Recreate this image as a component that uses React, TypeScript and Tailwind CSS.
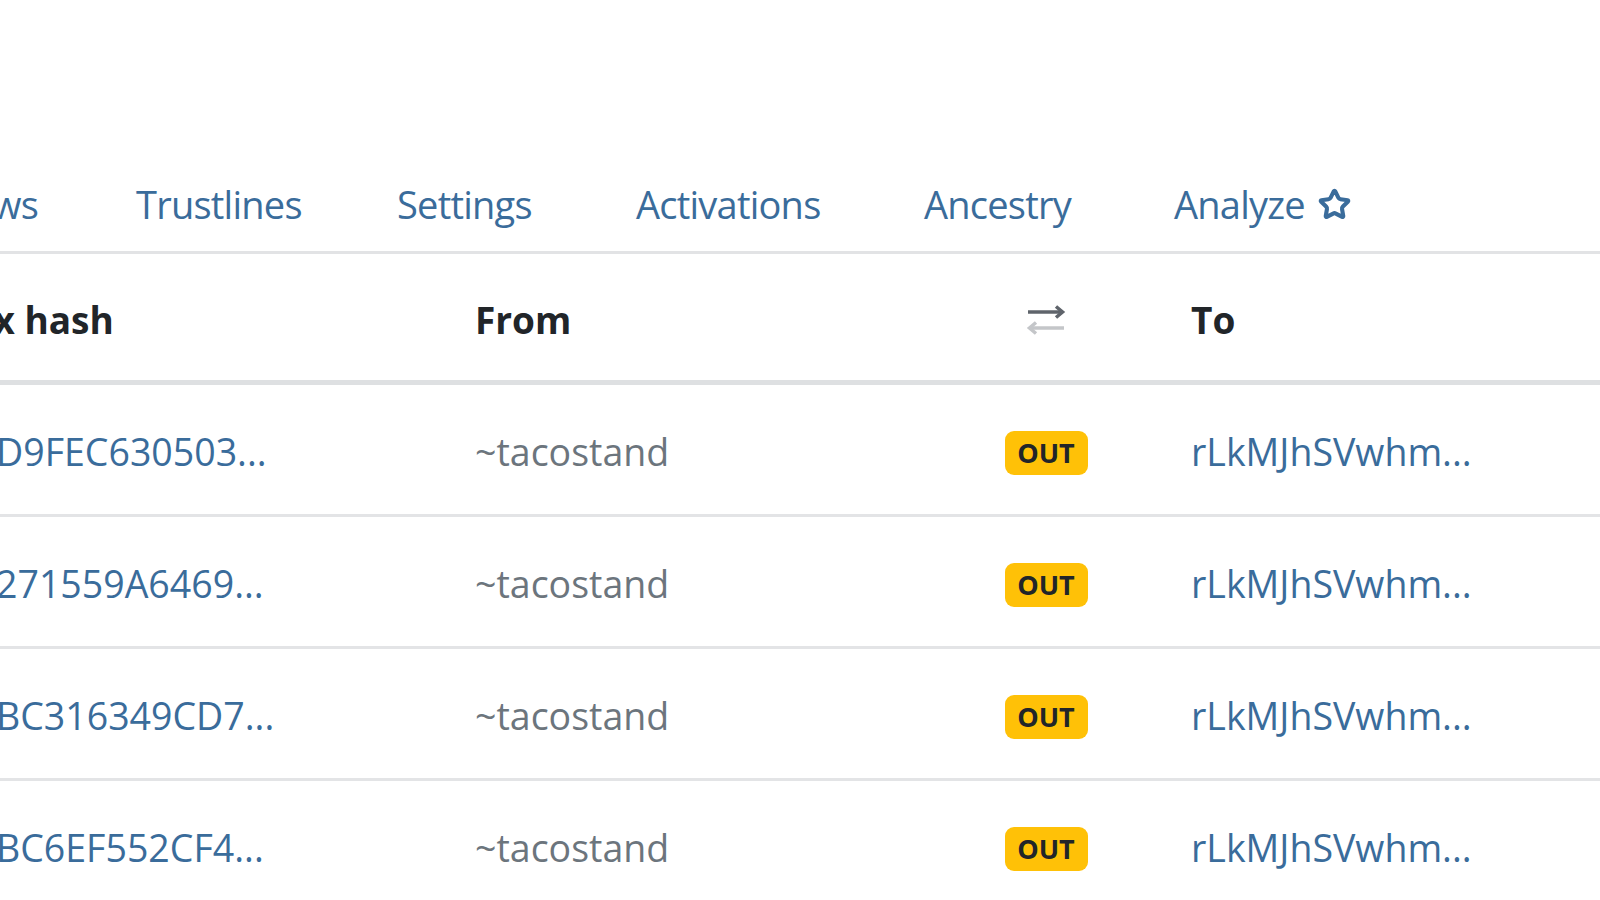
import { Star } from 'lucide-react';

type TxRow = { hash: string; from: string; to: string };

const rows: TxRow[] = [
  { hash: 'D9FEC630503...', from: '~tacostand', to: 'rLkMJhSVwhm...' },
  { hash: '271559A6469...', from: '~tacostand', to: 'rLkMJhSVwhm...' },
  { hash: 'BC316349CD7...', from: '~tacostand', to: 'rLkMJhSVwhm...' },
  { hash: 'BC6EF552CF4...', from: '~tacostand', to: 'rLkMJhSVwhm...' },
];

const tabs = [
  { label: 'Trustlines', width: 'w-[261px]' },
  { label: 'Settings', width: 'w-[239px]' },
  { label: 'Activations', width: 'w-[288px]' },
  { label: 'Ancestry', width: 'w-[250px]' },
];

function DirectionIcon() {
  return (
    <svg width="40" height="34" viewBox="0 0 40 34" fill="none">
      <path d="M2 9h33" stroke="#5f646b" strokeWidth="3.5" />
      <path d="M30 3.5l6.5 5.5-6.5 5.5" stroke="#5f646b" strokeWidth="3.5" strokeLinejoin="miter" />
      <path d="M5 25h33" stroke="#c4c6c9" strokeWidth="3.5" />
      <path d="M10 19.5l-6.5 5.5 6.5 5.5" stroke="#c4c6c9" strokeWidth="3.5" strokeLinejoin="miter" />
    </svg>
  );
}

function TabNav() {
  return (
    <nav className="mt-[152px] flex h-[102px] items-center border-b-[3px] border-[#e2e3e5] pt-[5px] text-[38px] tracking-[-0.02em] text-[#3a6c9b]">
      <div className="flex w-[87px] shrink-0 justify-end pr-[49px]">
        <span className="shrink-0 whitespace-nowrap">Flows</span>
      </div>
      {tabs.map((t) => (
        <div key={t.label} className={`${t.width} shrink-0 whitespace-nowrap pl-[49px]`}>
          {t.label}
        </div>
      ))}
      <div className="flex shrink-0 items-center whitespace-nowrap pl-[49px]">
        Analyze
        <Star className="ml-[13px]" size={33} strokeWidth={3} color="#3a6c9b" />
      </div>
    </nav>
  );
}

function TxTable() {
  return (
    <div>
      <div className="flex h-[131px] items-center border-b-[5px] border-[#dee0e2] pt-[6px] text-[37px] font-bold text-[#212529]">
        <div className="w-[445px] shrink-0 whitespace-nowrap">
          <span className="ml-[-28px]">Tx hash</span>
        </div>
        <div className="w-[515px] shrink-0 pl-[30px]">From</div>
        <div className="flex w-[172px] shrink-0 justify-center">
          <DirectionIcon />
        </div>
        <div className="pl-[59px]">To</div>
      </div>
      {rows.map((r) => (
        <div key={r.hash} className="flex h-[132px] items-center border-b-[3px] border-[#e3e4e6] pt-[6px] text-[37.5px]">
          <div className="w-[445px] shrink-0 whitespace-nowrap text-[#3a6c9b]">
            <span className="ml-[-4px]">{r.hash}</span>
          </div>
          <div className="w-[515px] shrink-0 whitespace-nowrap pl-[30px] text-[#6c757d]">{r.from}</div>
          <div className="flex w-[172px] shrink-0 justify-center">
            <span className="flex h-[44px] w-[83px] items-center justify-center rounded-[9px] bg-[#ffc107] text-[27px] font-bold leading-none text-[#212529]">
              OUT
            </span>
          </div>
          <div className="whitespace-nowrap pl-[59px] text-[#3a6c9b]">{r.to}</div>
        </div>
      ))}
    </div>
  );
}

export default function App() {
  return (
    <div className="h-[900px] w-[1600px] overflow-hidden bg-white font-['Open_Sans',sans-serif]">
      <TabNav />
      <TxTable />
    </div>
  );
}
